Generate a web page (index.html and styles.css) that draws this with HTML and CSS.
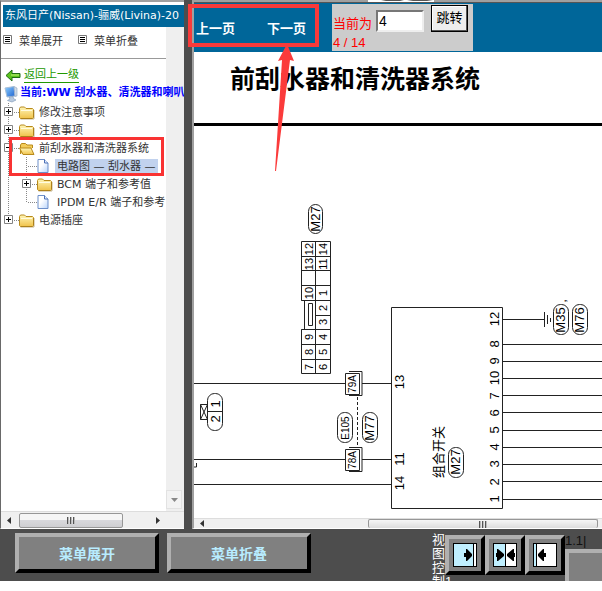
FILE: index.html
```html
<!DOCTYPE html>
<html lang="zh-CN">
<head>
<meta charset="utf-8">
<title>东风日产(Nissan)-骊威(Livina)</title>
<link rel="stylesheet" href="styles.css">
</head>
<body>
<svg class="defs" aria-hidden="true">
  <defs>
    <linearGradient id="gold" x1="0" y1="0" x2="0" y2="1"><stop offset="0" stop-color="#fff6b8"/><stop offset="1" stop-color="#f0c24a"/></linearGradient>
    <linearGradient id="paper" x1="0" y1="0" x2="1" y2="1"><stop offset=".4" stop-color="#fff"/><stop offset="1" stop-color="#b9d4fb"/></linearGradient>
    <linearGradient id="screen" x1="0" y1="0" x2="1" y2="1"><stop offset="0" stop-color="#8fd0ff"/><stop offset="1" stop-color="#1c62d0"/></linearGradient>
    <symbol id="list" viewBox="0 0 9 9"><path d="M.5.5h8v8h-8z" fill="#fff" stroke="#777"/><path d="M2 2.500h5M2 4.500h5M2 6.500h5" stroke="#000"/></symbol>
    <symbol id="folder" viewBox="0 0 16 14"><path d="M.5 11.500V2.500l1-1.500h4l1.500 1.500h6.500l1 1v8l-1 1h-12z" fill="url(#gold)" stroke="#b88a1c"/><path d="M2 4.500h11" stroke="#fffbe0"/><path d="M1.500 13h13.500V4" fill="none" stroke="#8c6a1a" stroke-opacity=".5"/></symbol>
    <symbol id="folder-open" viewBox="0 0 16 14"><path d="M1.500 12V3l1-1.500h4L8 3h5.500v3" fill="#f3cc5a" stroke="#b88a1c"/><path d="M.5 6h11.500l3 6.500H4z" fill="url(#gold)" stroke="#b88a1c"/></symbol>
    <symbol id="file" viewBox="0 0 12 14"><path d="M1 .5h6.500l3.500 3.500v9.500H1z" fill="url(#paper)" stroke="#6d8fc9"/><path d="M7.500.5V4H11" fill="#e2edff" stroke="#4b6fb5"/></symbol>
    <symbol id="box-plus" viewBox="0 0 9 9"><path d="M.5.5h8v8h-8z" fill="#fff" stroke="#848484"/><path d="M2 4.500h5M4.500 2v5" stroke="#000"/></symbol>
    <symbol id="box-minus" viewBox="0 0 9 9"><path d="M.5.5h8v8h-8z" fill="#fff" stroke="#848484"/><path d="M2 4.500h5" stroke="#000"/></symbol>
  </defs>
</svg>

<main class="frames">
  <nav class="side">
    <h2 class="side-title">东风日产(Nissan)-骊威(Livina)-20</h2>
    <div class="side-body">
      <div class="side-tools">
        <a href="#"><svg class="ico9"><use href="#list"/></svg>菜单展开</a>
        <a href="#"><svg class="ico9"><use href="#list"/></svg>菜单折叠</a>
      </div>
      <div class="back">
        <svg width="16" height="14" viewBox="0 0 16 14"><path d="M1 7.500 7 2v3.500h8v4H7V13z" fill="#5cc41c" stroke="#1d6b12"/><path d="M6 7h8" stroke="#c6f27c"/></svg>
        <a href="#">返回上一级</a>
      </div>
      <div class="current">
        <svg width="14" height="17" viewBox="0 0 14 17"><path d="M1 2l9-1.500 1 9.500-8 1z" fill="url(#screen)" stroke="#a8bfd8"/><path d="M10 .5l3 1.500v8l-2 .5z" fill="#cfdbe8" stroke="#8ea4bd" stroke-width=".6"/><path d="M5 11l4-.5.5 2 2.500 1.500-4 2-4.500-1.500L6 13z" fill="#b9cbe0" stroke="#7c95b5" stroke-width=".6"/></svg>
        <span>当前:WW 刮水器、清洗器和喇叭</span>
      </div>
      <ul class="tree">
        <li><svg class="branch" viewBox="0 0 34 18"><path class="dots" d="M7.500 0v18M13 9.500h6"/><use href="#box-plus" x="3" y="4" width="9" height="9"/><use href="#folder" x="18" y="3" width="16" height="14"/></svg><span>修改注意事项</span></li>
        <li><svg class="branch" viewBox="0 0 34 18"><path class="dots" d="M7.500 0v18M13 9.500h6"/><use href="#box-plus" x="3" y="4" width="9" height="9"/><use href="#folder" x="18" y="3" width="16" height="14"/></svg><span>注意事项</span></li>
        <li><svg class="branch" viewBox="0 0 34 18"><path class="dots" d="M7.500 0v18M13 9.500h6"/><use href="#box-minus" x="3" y="4" width="9" height="9"/><use href="#folder-open" x="18" y="3" width="16" height="14"/></svg><span>前刮水器和清洗器系统</span></li>
        <li><svg class="branch deep" viewBox="0 0 52 18"><path class="dots" d="M7.500 0v18M25.500 0v18M27 9.500h9"/><use href="#file" x="36" y="2" width="12" height="14"/></svg><span class="picked">电路图 — 刮水器 —</span></li>
        <li><svg class="branch deep" viewBox="0 0 52 18"><path class="dots" d="M7.500 0v18M25.500 0v18M31 9.500h6"/><use href="#box-plus" x="21" y="4" width="9" height="9"/><use href="#folder" x="36" y="3" width="16" height="14"/></svg><span>BCM 端子和参考值</span></li>
        <li><svg class="branch deep" viewBox="0 0 52 18"><path class="dots" d="M7.500 0v18M25.500 0v10M27 9.500h9"/><use href="#file" x="36" y="2" width="12" height="14"/></svg><span>IPDM E/R 端子和参考</span></li>
        <li><svg class="branch" viewBox="0 0 34 18"><path class="dots" d="M7.500 0v5M13 9.500h6"/><use href="#box-plus" x="3" y="4" width="9" height="9"/><use href="#folder" x="18" y="3" width="16" height="14"/></svg><span>电源插座</span></li>
      </ul>
      <div class="vbar" aria-hidden="true"><svg width="9" height="6" viewBox="0 0 9 6"><path d="M1 1h7L4.500 5z" fill="#888"/></svg></div>
    </div>
    <div class="hbar" aria-hidden="true">
      <svg width="18" height="9" viewBox="0 0 18 9"><path d="M10 1v7L6 4.500z" fill="#333"/></svg>
      <div class="thumb side-thumb"><i></i><i></i><i></i></div>
      <svg class="to-end" width="18" height="9" viewBox="0 0 18 9"><path d="M8 1v7l4-3.500z" fill="#333"/></svg>
    </div>
  </nav>

  <section class="view">
    <header class="pager">
      <a href="#">上一页</a>
      <a href="#">下一页</a>
      <form class="jump">
        <label for="page">当前为 <span>4 / 14</span></label>
        <input id="page" type="text" value="4">
        <button type="button">跳转</button>
      </form>
    </header>
    <div class="sheet">
      <h1>前刮水器和清洗器系统</h1>
      <svg class="diagram" width="900" height="392" viewBox="194 126 900 392" role="img" aria-label="电路图">
        <g class="wire">
          <path d="M301.500 241.500h29v132h-29v-44h3v-29h-3zM315.500 241v132M301.500 256.500h29M301.500 270.500h29M301.500 285.500h29M301.500 300.500h29M315.500 315.500h15M301.500 329.500h29M301.500 344.500h29M301.500 359.500h29M308.500 303.500h4v22h-4z"/>
          <rect x="308.500" y="204.500" width="14" height="29" rx="7"/>
          <path d="M193 383.500h152M362 383.500h29M193 459.500h152M362 459.500h29M193 484.500h198"/>
          <path d="M345.500 373.500h14v21h-14zM349 371.500h13v24h-13M345.500 449.500h14v21h-14zM349 447.500h13v24h-13"/>
          <path d="M357.500 397v50" stroke-dasharray="3 2"/>
          <rect x="337.500" y="412.500" width="15" height="30" rx="7"/>
          <rect x="362.500" y="412.500" width="15" height="30" rx="7"/>
          <rect x="207.500" y="393.500" width="15" height="37" rx="7"/>
          <path d="M207 411.500h15M200.500 404.500h7v15h-7zl7 15M207.500 404.500l-7 15M196.500 463v4h-4"/>
          <path d="M391.500 307.500h111v201h-111z"/>
          <path d="M503 319.500h41M544.500 312v15M547.500 315v9M550.500 318v4"/>
          <path d="M503 344.500h700M503 361.500h700M503 378.500h700M503 395.500h700M503 412.500h700M503 430.500h700M503 447.500h700M503 464.500h700M503 481.500h700M503 499.500h700"/>
          <rect x="553.500" y="304.500" width="15" height="30" rx="7"/>
          <rect x="572.500" y="304.500" width="15" height="30" rx="7"/>
          <rect x="448.500" y="447.500" width="15" height="30" rx="7"/>
        </g>
        <g class="tag">
          <text transform="translate(320 219) rotate(-90)">M27</text>
          <text transform="translate(460 462) rotate(-90)">M27</text>
          <text transform="translate(565 320) rotate(-90)">M35</text>
          <text transform="translate(584 320) rotate(-90)">M76</text>
          <text transform="translate(374 428) rotate(-90)">M77</text>
          <text transform="translate(566 301) rotate(-90)">,</text>
        </g>
        <g class="narrow">
          <text transform="translate(349 428) rotate(-90)">E105</text>
          <text transform="translate(356 384) rotate(-90)">79A</text>
          <text transform="translate(356 460) rotate(-90)">78A</text>
        </g>
        <g class="cell">
          <text transform="translate(313 249) rotate(-90)">12</text>
          <text transform="translate(313 264) rotate(-90)">13</text>
          <text transform="translate(313 293) rotate(-90)">10</text>
          <text transform="translate(313 337) rotate(-90)">9</text>
          <text transform="translate(313 352) rotate(-90)">8</text>
          <text transform="translate(313 367) rotate(-90)">7</text>
          <text transform="translate(327 249) rotate(-90)">14</text>
          <text transform="translate(327 264) rotate(-90)">11</text>
          <text transform="translate(327 293) rotate(-90)">1</text>
          <text transform="translate(327 308) rotate(-90)">2</text>
          <text transform="translate(327 322) rotate(-90)">3</text>
          <text transform="translate(327 337) rotate(-90)">4</text>
          <text transform="translate(327 352) rotate(-90)">5</text>
          <text transform="translate(327 367) rotate(-90)">6</text>
        </g>
        <g class="pin">
          <text transform="translate(220 404) rotate(-90)">1</text>
          <text transform="translate(220 419) rotate(-90)">2</text>
          <text transform="translate(404 382) rotate(-90)">13</text>
          <text transform="translate(404 459) rotate(-90)">11</text>
          <text transform="translate(404 483) rotate(-90)">14</text>
          <text transform="translate(499 319) rotate(-90)">12</text>
          <text transform="translate(499 344) rotate(-90)">8</text>
          <text transform="translate(499 361) rotate(-90)">9</text>
          <text transform="translate(499 378) rotate(-90)">10</text>
          <text transform="translate(499 396) rotate(-90)">7</text>
          <text transform="translate(499 413) rotate(-90)">6</text>
          <text transform="translate(499 430) rotate(-90)">5</text>
          <text transform="translate(499 447) rotate(-90)">4</text>
          <text transform="translate(499 464) rotate(-90)">3</text>
          <text transform="translate(499 482) rotate(-90)">2</text>
          <text transform="translate(499 499) rotate(-90)">1</text>
          <text transform="translate(443 452) rotate(-90)">组合开关</text>
        </g>
      </svg>
    </div>
    <div class="hbar view-bar" aria-hidden="true">
      <svg width="18" height="9" viewBox="0 0 18 9"><path d="M10 1v7L6 4.500z" fill="#333"/></svg>
      <div class="thumb view-thumb"><i></i><i></i><i></i></div>
    </div>
  </section>
</main>

<footer class="dock">
  <button type="button" class="big">菜单展开</button>
  <button type="button" class="big">菜单折叠</button>
  <div class="layout-tools">
    <span class="caption">视<br>图<br>控<br>制1</span>
    <button type="button" class="mode" aria-label="左侧展开"><svg width="24" height="24" viewBox="0 0 24 24"><path d="M0 0h24v24H0z" fill="#000"/><path d="M1 1h19v22H1z" fill="#bfefff"/><path d="M21 1h2v22h-2z" fill="#fff"/><path d="M11 10h2V6h1l5 5v2l-5 5h-1v-4h-2z" fill="#000"/></svg></button>
    <button type="button" class="mode" aria-label="左右均分"><svg width="24" height="24" viewBox="0 0 24 24"><path d="M0 0h24v24H0z" fill="#000"/><path d="M1 1h11v22H1z" fill="#bfefff"/><path d="M13 1h10v22H13z" fill="#fff"/><path d="M3 10h1V6h1l6 5v2l-6 5H4v-4H3zM22 10h-1V6h-1l-6 5v2l6 5h1v-4h1z" fill="#000"/></svg></button>
    <button type="button" class="mode" aria-label="右侧展开"><svg width="24" height="24" viewBox="0 0 24 24"><path d="M0 0h24v24H0z" fill="#000"/><path d="M1 1h2v22H1z" fill="#bfefff"/><path d="M4 1h19v22H4z" fill="#fff"/><path d="M13 10h-2V6h-1l-5 5v2l5 5h1v-4h2z" fill="#000"/></svg></button>
    <div class="extra"><span>1.1|</span><div class="panel"></div></div>
  </div>
</footer>

<svg class="marks" width="602" height="200" viewBox="0 0 602 200" aria-hidden="true">
  <path d="M368 0h66v2h-66z" fill="#fff"/><path d="M381 0h23l-4 1h-14zM407 0h26l-6 1h-14z" fill="#555"/>
  <path d="M190 6h127v39H190z" fill="none" stroke="#f93a3a" stroke-width="4"/>
  <path d="M10.500 138.500h152v36h-152z" fill="none" stroke="#f93333" stroke-width="3"/>
  <path d="M287 44l7 17-4-1-14 111h-1l7-111-4 1z" fill="#fb3b3b"/>
</svg>
</body>
</html>
```

FILE: styles.css
```css
* { box-sizing: border-box; }

body {
  margin: 0;
  height: 100vh;
  padding-bottom: 10px;
  display: flex;
  flex-direction: column;
  overflow: hidden;
  background: #fff;
  font-family: "Liberation Sans", "Noto Sans CJK SC", sans-serif;
  font-size: 13px;
  color: #000;
}

.defs { position: absolute; width: 0; height: 0; }

.marks { position: absolute; top: 0; left: 0; pointer-events: none; }

.frames {
  flex: 1;
  min-height: 0;
  display: grid;
  grid-template-columns: 184px minmax(0, 1fr);
  gap: 8px;
  background: #4d4d4d;
}

/* Menu frame */
.side {
  display: flex;
  flex-direction: column;
  min-width: 0;
  min-height: 0;
  border-top: 2px solid #a0a0a0;
  border-left: 1px solid #696969;
  border-bottom: 1px solid #fff;
  background: #fff;
  font-family: "DejaVu Sans", "Noto Sans CJK SC", sans-serif;
  font-size: 11px;
  color: #333;
}

.side-title {
  margin: 3px 0 0 2px;
  padding-left: 2px;
  overflow: hidden;
  background: #069;
  color: #fff;
  font-size: 11px;
  font-weight: normal;
  line-height: 22px;
  white-space: nowrap;
}

.side-body {
  position: relative;
  flex: 1;
  min-height: 0;
  overflow: hidden;
  padding-right: 18px;
  background: linear-gradient(#efefef, #efefef) right / 18px 100% no-repeat;
  white-space: nowrap;
}

.side-tools {
  display: flex;
  gap: 15px;
  height: 32px;
  padding: 0 0 6px 2px;
  border-bottom: 1px solid #999;
}

.side-tools a {
  display: flex;
  align-items: center;
  gap: 7px;
  color: #333;
  text-decoration: none;
}

.ico9 { width: 9px; height: 9px; }

.back {
  display: flex;
  align-items: center;
  gap: 3px;
  height: 22px;
  margin-top: 5px;
  padding-left: 4px;
}

.back a {
  color: #290;
  line-height: 15px;
  text-decoration: none;
  border-bottom: 1px solid #290;
}

.current {
  display: flex;
  align-items: flex-start;
  gap: 2px;
  height: 17px;
  padding-left: 3px;
  color: #00f;
  font-weight: bold;
  line-height: 14px;
}

.current svg { flex: none; }

.tree { margin: 0; padding: 0; list-style: none; overflow: hidden; }

.tree li {
  display: flex;
  align-items: flex-end;
  gap: 4px;
  height: 18px;
}

.tree span { line-height: 16px; }

.branch { flex: none; width: 34px; height: 18px; }
.branch.deep { width: 52px; }

.dots { fill: none; stroke: #888; stroke-dasharray: 1 1; }

.tree .picked {
  margin-left: -2px;
  padding: 0 2px;
  background: #c1d2ee;
}

.vbar {
  position: absolute;
  right: 2px;
  bottom: 2px;
  width: 16px;
  height: 19px;
  display: grid;
  place-items: center;
  border: 1px solid #e2e2e2;
  background: #f3f3f3;
}

.hbar {
  flex: none;
  display: flex;
  align-items: center;
  height: 17px;
  padding-right: 18px;
  border-top: 1px solid #ddd;
  background: #f0f0f0;
}

.hbar svg { flex: none; }

.hbar .to-end { margin-left: auto; }

.thumb {
  display: flex;
  align-items: center;
  justify-content: center;
  gap: 1px;
  height: 15px;
  border: 1px solid #979797;
  border-radius: 2px;
  background: linear-gradient(#f6f6f6 45%, #d8d8dc 50%, #cfcfd2);
}

.thumb i { width: 2px; height: 7px; background: linear-gradient(90deg, #555 50%, #bbb 50%); }

.side-thumb { width: 104px; }

/* Page frame */
.view {
  display: flex;
  flex-direction: column;
  min-width: 0;
  min-height: 0;
  border-top: 2px solid #a0a0a0;
  border-left: 2px solid #a0a0a0;
  border-bottom: 1px solid #fff;
  background: #fff;
}

.pager {
  display: flex;
  align-items: center;
  gap: 32px;
  height: 50px;
  padding-left: 2px;
  border-top: 1px solid #555;
  background: #069;
}

.pager a {
  color: #fff;
  font-weight: bold;
  text-decoration: none;
}

.jump {
  display: flex;
  align-items: flex-start;
  height: 47px;
  margin-left: -6px;
  padding: 1px 5px 0 1px;
  background: #ccc;
}

.jump label {
  width: 43px;
  padding-top: 9px;
  color: #f00;
  line-height: 19px;
}

.jump span { display: block; white-space: nowrap; }

.jump input {
  width: 48px;
  height: 22px;
  margin: 5px 7px 0 0;
  padding: 0 1px;
  border: 2px solid;
  border-color: #777 #eee #eee #777;
  background: #fff;
  font: 14px "Liberation Sans", sans-serif;
}

.jump button {
  width: 37px;
  height: 27px;
  padding: 0 0 4px;
  border: 1px solid #000;
  box-shadow: inset -1px -1px #555, inset 1px 1px #fff;
  background: #eee;
  font: 13px "Liberation Sans", "Noto Sans CJK SC", sans-serif;
}

.sheet { flex: 1; min-height: 0; overflow: hidden; }

.sheet h1 {
  margin: 0;
  padding: 9px 0 26px 36px;
  border-bottom: 3px solid #000;
  font-size: 25px;
  line-height: 36px;
  font-weight: bold;
  white-space: nowrap;
}

.diagram { display: block; }

.wire { fill: none; stroke: #222; stroke-width: 1; }

.diagram text { text-anchor: middle; fill: #000; }
.tag { font-size: 13px; }
.narrow { font-size: 10px; }
.cell { font-size: 11px; }
.pin { font-size: 13px; }

.view-bar { height: 10px; padding-right: 4px; }

.view-thumb {
  width: 57%;
  height: 9px;
  margin-left: auto;
  border-bottom: 0;
  background: linear-gradient(#f6f6f6, #ddd);
}

/* Bottom control strip */
.dock {
  flex: none;
  display: flex;
  align-items: flex-start;
  gap: 8px;
  height: 52px;
  padding: 4px 0 0 15px;
  overflow: hidden;
  background: #4d4d4d;
}

.dock button {
  border: 4px solid;
  border-color: #b0b0b0 #000 #000 #b0b0b0;
  background: #808080;
}

.big {
  width: 144px;
  height: 40px;
  padding: 0;
  color: #b8ecff;
  font: bold 14px "Liberation Sans", "Noto Sans CJK SC", sans-serif;
}

.layout-tools { display: flex; margin-left: auto; }

.caption {
  width: 13px;
  color: #fff;
  line-height: 14px;
  white-space: nowrap;
}

.mode {
  display: grid;
  place-items: center;
  width: 40px;
  height: 40px;
  margin-top: 2px;
  padding: 0;
}

.extra { width: 37px; color: #111; line-height: 16px; }

.panel {
  height: 40px;
  border: 4px solid #b0b0b0;
  border-right: 0;
  background: #808080;
}
```
